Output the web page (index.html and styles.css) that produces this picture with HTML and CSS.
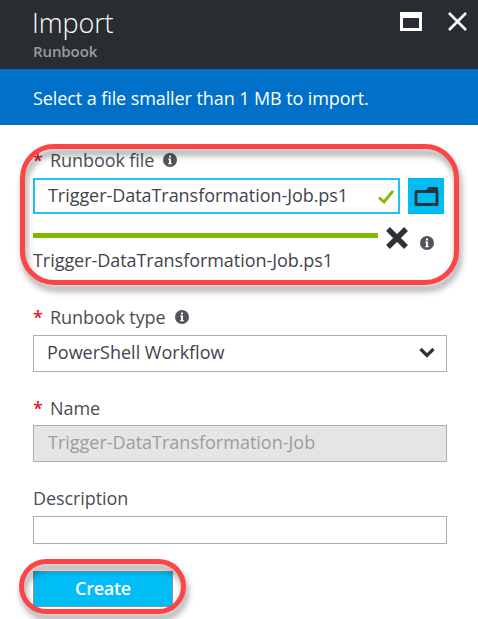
FILE: index.html
```html
<!DOCTYPE html>
<html lang="en">
<head>
<meta charset="utf-8">
<title>Import</title>
<link rel="stylesheet" href="styles.css">
</head>
<body>
<svg class="defs" width="0" height="0" aria-hidden="true">
  <symbol id="info" viewBox="0 0 14 14"><circle cx="7" cy="7" r="7" fill="#50565b"/><path d="M6 2.5h2v2H6zM5.2 5.6H8v4.5h.8v1.1H5.2v-1.1H6V6.7h-.8z" fill="#fff"/></symbol>
</svg>
<header class="header">
  <div>
    <h1 class="title">Import</h1>
    <p class="subtitle">Runbook</p>
  </div>
  <div class="actions">
    <svg width="22" height="19" viewBox="0 0 22 19"><path fill="#fff" fill-rule="evenodd" d="M0 0h22v19H0zM3 6v10h16V6z"/></svg>
    <svg width="19" height="19" viewBox="0 0 19 19"><path d="M1 1l17 17M18 1L1 18" stroke="#fff" stroke-width="2.6"/></svg>
  </div>
</header>
<div class="banner">Select a file smaller than 1 MB to import.</div>
<main class="form">
  <section class="file-field">
    <div class="label"><b class="req">*</b><span>Runbook file</span><svg class="info" width="14" height="14"><use href="#info"/></svg></div>
    <div class="file-row">
      <div class="box file-box"><span class="value">Trigger-DataTransformation-Job.ps1</span>
        <svg width="16" height="14" viewBox="0 0 16 14"><path d="M1 7.5L6 12 15 1" fill="none" stroke="#7fba00" stroke-width="2.8"/></svg>
      </div>
      <div class="browse"><svg width="25" height="21" viewBox="0 0 25 21"><path d="M2 5.500H23V18.500H2z" fill="none" stroke="#2b333a" stroke-width="2.800" stroke-linejoin="round"/><path d="M11.500 5.500L14.500 1h8.500l1 1v4z" fill="#2b333a"/></svg></div>
    </div>
    <div class="progress-row">
      <div class="progress"></div>
      <svg class="remove" width="22" height="22" viewBox="0 0 22 22"><path d="M2 2l18 18M20 2L2 20" stroke="#2b333a" stroke-width="5.400"/></svg>
      <svg class="info-small" width="14" height="14"><use href="#info"/></svg>
    </div>
    <div class="filename value">Trigger-DataTransformation-Job.ps1</div>
    <div class="callout callout-file"></div>
  </section>
  <section class="field">
    <div class="label"><b class="req">*</b><span>Runbook type</span><svg class="info" width="14" height="14"><use href="#info"/></svg></div>
    <div class="box select"><span>PowerShell Workflow</span>
      <svg width="16" height="11" viewBox="0 0 16 11"><path d="M1.500 2L8 8.500 14.500 2" fill="none" stroke="#2b333a" stroke-width="3.200"/></svg>
    </div>
  </section>
  <section class="field">
    <div class="label"><b class="req">*</b><span>Name</span></div>
    <div class="box disabled"><span>Trigger-DataTransformation-Job</span></div>
  </section>
  <section class="field desc">
    <div class="label"><span>Description</span></div>
    <div class="box empty"></div>
  </section>
  <div class="submit">
    <div class="button">Create</div>
    <div class="callout callout-create"></div>
  </div>
</main>
</body>
</html>
```
FILE: styles.css
```css
* { box-sizing: border-box; }
body {
  margin: 0;
  width: 478px;
  height: 619px;
  overflow: hidden;
  background: #fff;
  color: #4a4e55;
  font: 18px/24px "Open Sans", sans-serif;
  white-space: nowrap;
}
svg { display: block; flex: none; }
.defs { display: none; }
.header {
  height: 69px;
  padding: 5px 11px 0 32px;
  display: flex;
  justify-content: space-between;
  background: #292d31;
}
.title { margin: 0; color: #fff; font-size: 27px; font-weight: 300; line-height: 36px; letter-spacing: -.1px; }
.subtitle { margin: 0; padding-left: 1px; color: #999c9e; font-size: 15px; font-weight: 600; line-height: 20px; letter-spacing: -.1px; }
.actions { display: flex; gap: 26px; padding-top: 7px; }
.banner {
  height: 56px;
  padding: 17px 33px 15px;
  background: #0070c9;
  color: #fff;
  letter-spacing: -.09px;
}
.form { padding: 23px 31px 0 33px; }
.label { display: flex; height: 24px; letter-spacing: -.08px; }
.req { width: 17px; color: #e81123; font-weight: 600; font-size: 18px; line-height: 24px; }
.info { margin: 5px 0 0 9px; }
.box {
  height: 37px;
  border: 1px solid #aeaeae;
  padding: 0 12px 0 14px;
  display: flex;
  align-items: center;
  justify-content: space-between;
  color: #3f444b;
}
.value { letter-spacing: -.05px; }
.file-field { position: relative; height: 157px; }
.file-row { display: flex; gap: 8px; margin-top: 6px; }
.file-box { width: 367px; height: 36px; border: 2px solid #1fc0f2; padding: 0 4px 3px 13px; }
.file-box svg { margin-top: 4px; }
.browse { width: 36px; height: 36px; background: #00bcf2; display: grid; place-items: center; }
.progress-row { display: flex; height: 34px; }
.progress { width: 345px; height: 5px; margin-top: 19px; background: #7fba00; }
.remove { margin: 13px 0 0 8px; }
.info-small { margin: 22px 0 0 12px; }
.filename { color: #3f444b; }
.callout { position: absolute; border: 5px solid #fd4545; filter: drop-shadow(2px 6px 3px rgba(0, 0, 0, .4)); }
.callout-file { left: -13px; top: -4px; width: 439px; height: 141px; border-radius: 34px; }
.field { height: 90.500px; }
.field .box { margin-top: 5.500px; }
.field .select { padding: 0 11px 2px 13px; }
.field .disabled { background: #e5e5e5; color: #9a9da1; padding-bottom: 3px; }
.desc { height: 85px; }
.field .empty { height: 28px; }
.submit { position: relative; }
.button {
  width: 140px;
  height: 36px;
  background: #00bcf7;
  border: 1px solid #8f9598;
  color: #fff;
  font-weight: 600;
  line-height: 33px;
  letter-spacing: -.25px;
  text-align: center;
}
.callout-create { left: -14px; top: -12px; width: 167px; height: 55px; border-radius: 28px; }
```
